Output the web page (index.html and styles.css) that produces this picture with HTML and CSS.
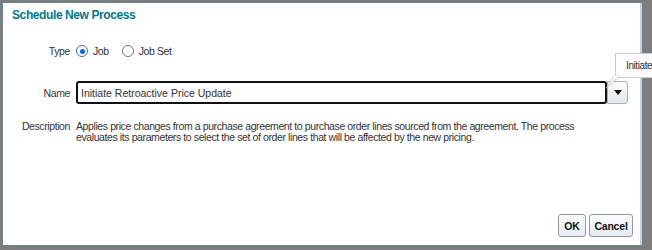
FILE: index.html
```html
<!DOCTYPE html>
<html lang="en">
<head>
    <meta charset="UTF-8">
    <meta name="viewport" content="width=device-width, initial-scale=1.0">
    <title>Schedule New Process</title>
    <link rel="stylesheet" href="styles.css">
</head>
<body>

    <div class="dialog">
        <h2 class="title">Schedule New Process</h2>

        <form class="form" id="processForm">
            <span class="label">Type</span>
            <div class="radios">
                <label class="radio"><input type="radio" name="type" value="job" checked><span class="dot"></span>Job</label>
                <label class="radio"><input type="radio" name="type" value="jobset"><span class="dot"></span>Job Set</label>
            </div>

            <label class="label" for="name">Name</label>
            <div class="combo">
                <input type="text" id="name" name="name" value="Initiate Retroactive Price Update">
                <button type="button" class="drop"><svg width="8" height="5" viewBox="0 0 8 5"><path d="M0 0 H8 L4 5 Z" fill="#111"/></svg></button>
            </div>

            <span class="label label-top">Description</span>
            <p class="desc">Applies price changes from a purchase agreement to purchase order lines sourced from the agreement. The process evaluates its parameters to select the set of order lines that will be affected by the new pricing.</p>
        </form>

        <div class="actions">
            <button type="button" class="btn btn-ok">OK</button>
            <button type="button" class="btn btn-cancel">Cancel</button>
        </div>

        <div class="tip">
            <svg class="tip-arrow" width="14" height="13" viewBox="0 0 14 13"><path d="M13.5 0 L0.5 12 L8 0" fill="#fdfdfd" stroke="#c4cbd1" stroke-width="1"/></svg>
            <span>Initiate</span>
        </div>
    </div>

</body>
</html>
```

FILE: styles.css
```css
body { margin: 0; background: #7d7d7d; font-family: "Liberation Sans", Arial, sans-serif; font-size: 10.5px; letter-spacing: -0.4px; color: #333; overflow: hidden; }

.dialog { position: relative; margin: 2px 0 0 2px; width: 639px; height: 242px; background: #fff; border: 1px solid #6c8193; box-shadow: inset -2px 0 0 #c9d0d6; display: flex; flex-direction: column; }

.title { margin: 0; padding: 6px 0 0 9px; height: 13px; line-height: 13px; font-size: 12px; letter-spacing: -0.4px; font-weight: bold; color: #00798b; }

.form { display: grid; grid-template-columns: 67px 1fr; grid-template-rows: 26px 23px auto; column-gap: 6px; row-gap: 17px; align-items: center; margin: 16px 14px 0 0; }
.label { text-align: right; color: #333; }
.label-top { align-self: start; line-height: 11px; }

.radios { display: flex; gap: 13px; align-items: center; }
.radio { display: flex; align-items: center; gap: 5px; }
.radio input { display: none; }
.dot { width: 10px; height: 10px; border: 1px solid #6f7a83; border-radius: 50%; background: #fff; position: relative; }
.radio input:checked + .dot { border-color: #3a70b8; }
.radio input:checked + .dot::after { content: ""; position: absolute; left: 2.5px; top: 2.5px; width: 5px; height: 5px; border-radius: 50%; background: #0a66d0; }

.combo { display: flex; }
.combo input { flex: 1; height: 19px; margin: 0; padding: 0 0 0 3px; border: 2px solid #111; border-radius: 3px; font: inherit; color: #333; background: #fcfdff; }
.drop { width: 21px; height: 23px; border: 1px solid #a6b1bb; border-radius: 0 3px 3px 0; background: linear-gradient(#fbfcfd, #e3e8ec); padding: 0; display: flex; align-items: center; justify-content: center; }

.desc { margin: 0; max-width: 510px; line-height: 11px; align-self: start; }

.actions { margin-top: auto; display: flex; justify-content: flex-end; gap: 3px; padding: 0 9px 8px 0; }
.btn { height: 23px; padding: 0; border: 1px solid #8d9aa6; border-radius: 3px; background: linear-gradient(#fdfdfe, #e6ebef); font: bold 10.5px "Liberation Sans", Arial, sans-serif; letter-spacing: -0.2px; color: #111; }
.btn-ok { width: 28px; }
.btn-cancel { width: 44px; }

.tip { position: absolute; left: 612px; top: 50px; width: 60px; height: 23px; padding-left: 10px; line-height: 23px; font-size: 10px; white-space: nowrap; background: #fdfdfd; border: 1px solid #c4cbd1; color: #333; }
.tip-arrow { position: absolute; left: -10px; top: 22px; }
```
